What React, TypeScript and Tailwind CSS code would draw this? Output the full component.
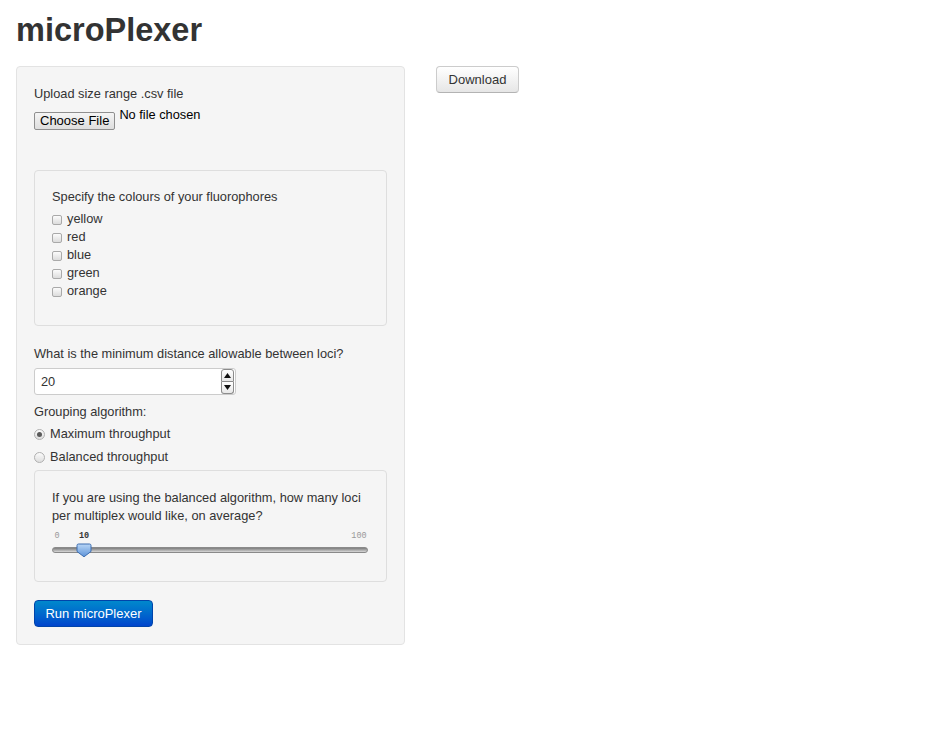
import React from "react";

function Checkbox() {
  return (
    <span className="mt-[2px] inline-block w-[10px] h-[10px] rounded-[2px] border border-[#a9a9a9] bg-gradient-to-b from-[#fbfbfb] to-[#dcdcdc] shrink-0" />
  );
}

function Radio({ checked }: { checked?: boolean }) {
  return (
    <span className="flex items-center justify-center w-[11px] h-[11px] rounded-full border border-[#b0b0b0] bg-gradient-to-b from-[#fbfbfb] to-[#dedede] shrink-0">
      {checked && <span className="block w-[5px] h-[5px] rounded-full bg-[#5a5a5a]" />}
    </span>
  );
}

function Spinner() {
  return (
    <div className="flex flex-col w-[13px] h-[25px] mr-[1px] gap-0">
      <div className="flex-1 flex items-center justify-center border border-[#8c8c8c] rounded-t-[3px] bg-gradient-to-b from-white to-[#e8e8e8]">
        <svg width="7" height="5" viewBox="0 0 7 5">
          <path d="M0 5 L3.5 0 L7 5 Z" fill="#111" />
        </svg>
      </div>
      <div className="flex-1 flex items-center justify-center border border-t-0 border-[#8c8c8c] rounded-b-[3px] bg-gradient-to-b from-white to-[#e8e8e8]">
        <svg width="7" height="5" viewBox="0 0 7 5">
          <path d="M0 0 L7 0 L3.5 5 Z" fill="#111" />
        </svg>
      </div>
    </div>
  );
}

function Slider() {
  return (
    <div className="relative h-[38px] w-full">
      <span className="absolute top-[6px] left-[1px] w-[8px] text-center text-[8.5px] leading-[10px] text-[#999] font-['Liberation_Mono',monospace]">0</span>
      <span className="absolute top-[6px] left-[24px] w-[16px] text-center text-[8.5px] leading-[10px] font-bold text-[#333] font-['Liberation_Mono',monospace]">10</span>
      <span className="absolute top-[6px] left-[296px] w-[22px] text-center text-[8.5px] leading-[10px] text-[#999] font-['Liberation_Mono',monospace]">100</span>
      <div className="absolute top-[22px] left-0 w-[316px] h-[6px] rounded-[3px] border border-[#8a8a8a] bg-gradient-to-b from-[#7d7d7d] via-[#a9a9a9] to-[#d9d9d9]" />
      <svg className="absolute top-[18px] left-[24px]" width="16" height="15" viewBox="0 0 16 15">
        <defs>
          <linearGradient id="hg" x1="0" y1="0" x2="0" y2="1">
            <stop offset="0" stopColor="#b9d6f6" />
            <stop offset="1" stopColor="#5d93d8" />
          </linearGradient>
        </defs>
        <path d="M2.5 1 H13.5 Q15 1 15 2.5 V8.5 L8 13.8 L1 8.5 V2.5 Q1 1 2.5 1 Z" fill="url(#hg)" stroke="#3c6db0" strokeWidth="1" />
      </svg>
    </div>
  );
}

export default function App() {
  const colours = ["yellow", "red", "blue", "green", "orange"];
  return (
    <div className="min-h-[733px] bg-white px-4 font-['Liberation_Sans',Arial,sans-serif] text-[12.8px] leading-[18px] text-[#333]">
      <h2 className="mt-[10px] mb-4 h-10 text-[32.5px] leading-[40px] font-bold text-[#333]">microPlexer</h2>
      <div className="flex items-start">
        <div className="w-[389px] rounded-[4px] border border-[#e3e3e3] bg-[#f5f5f5] px-[17px] pt-[17px] pb-[17px]">
          <div className="leading-[20px]">Upload size range .csv file</div>
          <div className="mt-[2px] flex items-start h-[24px]">
            <span className="mt-[6px] flex items-center h-[18px] px-[5px] rounded-[2px] border border-[#8f8f8f] bg-gradient-to-b from-[#f5f5f5] to-[#dedede] text-[13px] leading-[16px] text-black">
              Choose File
            </span>
            <span className="ml-[4px] leading-[18px] text-black">No file chosen</span>
          </div>

          <div className="mt-[40px] rounded-[4px] border border-[#dedede] bg-[#f5f5f5] px-[17px] pt-[16px] pb-[25px]">
            <div className="leading-[20px]">Specify the colours of your fluorophores</div>
            <div className="mt-[3px] flex flex-col">
              {colours.map((c) => (
                <div key={c} className="flex items-center h-[18px] gap-[5px]">
                  <Checkbox />
                  <span>{c}</span>
                </div>
              ))}
            </div>
          </div>

          <div className="mt-[18px] leading-[20px]">What is the minimum distance allowable between loci?</div>
          <div className="mt-[4px] flex items-center justify-between w-[202px] h-[27px] rounded-[3px] border border-[#cccccc] bg-white pl-[6px]">
            <span>20</span>
            <Spinner />
          </div>

          <div className="mt-[7px] leading-[20px]">Grouping algorithm:</div>
          <div className="mt-[3px] flex items-center h-[18px] gap-[5px]">
            <Radio checked />
            <span>Maximum throughput</span>
          </div>
          <div className="mt-[5px] flex items-center h-[18px] gap-[5px]">
            <Radio />
            <span>Balanced throughput</span>
          </div>

          <div className="mt-[4px] rounded-[4px] border border-[#dedede] bg-[#f5f5f5] px-[17px] pt-[18px] pb-[18px]">
            <div>
              If you are using the balanced algorithm, how many loci
              <br />
              per multiplex would like, on average?
            </div>
            <Slider />
          </div>

          <button className="mt-[18px] h-[27px] w-[119px] rounded-[4px] border border-[#0044aa] bg-gradient-to-b from-[#0088cc] to-[#0044cc] text-white text-[13px]">
            Run microPlexer
          </button>
        </div>

        <button className="ml-[31px] h-[27px] w-[83px] rounded-[4px] border border-[#cccccc] border-b-[#b3b3b3] bg-gradient-to-b from-white to-[#e6e6e6] text-[13px] text-[#333]">
          Download
        </button>
      </div>
    </div>
  );
}
